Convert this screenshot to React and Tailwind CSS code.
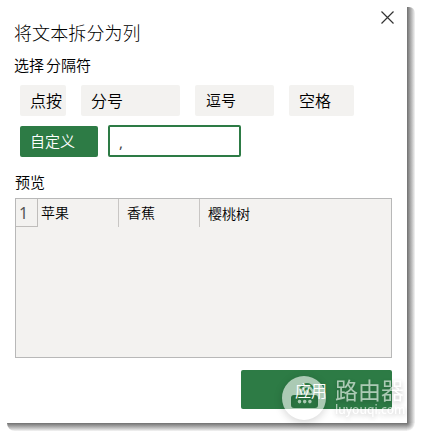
const delimiters = [
  { label: "点按", box: "w-[46px] pl-[10px] pb-[2px]" },
  { label: "分号", box: "w-[99px] pl-[10px] pb-[2px]" },
  { label: "逗号", box: "w-[79px] pl-[11px] text-[15px]" },
  { label: "空格", box: "w-[65px] pl-[10px] pb-px" },
];

function CloseIcon() {
  return (
    <svg className="-mr-[2px]" width="13" height="13" viewBox="0 0 13 13" fill="none" stroke="#333" strokeWidth="1.2">
      <path d="M.5.5 12.5 12.5M12.5.5.5 12.5" />
    </svg>
  );
}

function Watermark() {
  return (
    <div className="pointer-events-none absolute left-[282px] top-[376px] flex text-white opacity-60">
      <svg className="overflow-visible drop-shadow-[0_2px_4px_rgba(0,0,0,0.3)]" width="44" height="44" viewBox="0 0 44 44">
        <path
          fill="#fff"
          fillRule="evenodd"
          d="M22 0a22 22 0 1 0 0 44a22 22 0 1 0 0-44ZM12 19H33Q36 19 36 22V29Q36 32 33 32H12Q9 32 9 29V22Q9 19 12 19ZM17.5 23.8a1.8 1.8 0 1 0 0 3.6a1.8 1.8 0 1 0 0-3.6ZM22.7 23.8a1.8 1.8 0 1 0 0 3.6a1.8 1.8 0 1 0 0-3.6ZM27.9 23.8a1.8 1.8 0 1 0 0 3.6a1.8 1.8 0 1 0 0-3.6Z"
        />
        <path d="M18 13Q25 3 32 13M21 17Q25 8 29 17" fill="none" stroke="#2d7b45" strokeWidth="2.2" />
      </svg>
      <div className="ml-[9px] flex flex-col whitespace-nowrap [text-shadow:0_2px_5px_rgba(0,0,0,0.4)]">
        <span className="h-[27px] text-[23px] leading-[27px] font-normal">路由器</span>
        <span className="font-['Noto_Sans',sans-serif] text-[12px] leading-[13px] font-medium">luyouqi.com</span>
      </div>
    </div>
  );
}

export default function App() {
  return (
    <div className="relative grid h-[438px] w-[422px] grid-cols-[407px_8px] grid-rows-[423px_8px] overflow-hidden bg-white font-['Noto_Sans_CJK_SC',sans-serif] font-[350] text-black">
      <main className="flex flex-col bg-white px-[15px]">
        <div className="flex h-[22px] justify-end pt-[11px]">
          <CloseIcon />
        </div>
        <h1 className="-ml-px h-[33px] text-[18px] leading-[20px] tracking-[0.1px] font-light">将文本拆分为列</h1>
        <h2 className="-ml-px flex h-[30px] gap-[2px] text-[15px] leading-[20px] font-[350]">
          <span>选择</span>
          <span>分隔符</span>
        </h2>
        <div className="ml-[5px] flex gap-[15px] text-[16px]">
          {delimiters.map((item) => (
            <button key={item.label} className={"flex h-[31px] items-center rounded-[2px] bg-[#f3f2f0] text-left " + item.box}>
              {item.label}
            </button>
          ))}
        </div>
        <div className="ml-[5px] mt-[9px] flex gap-[10px]">
          <button className="mt-px flex h-[31px] w-[78px] items-center rounded-[2px] bg-[#2d7b45] pl-[10px] text-[15px] text-white">自定义</button>
          <div className="flex h-[32px] w-[133px] items-center rounded-[2px] border-2 border-[#2d7b45] pl-[9px] pt-[2px] font-['Noto_Sans',sans-serif] text-[15px] font-normal text-[#444]">,</div>
        </div>
        <h2 className="mt-[15px] h-[26px] text-[15px] leading-[20px] font-[350]">预览</h2>
        <div className="h-[160px] border border-[#b8b8b8] bg-[#f3f2f0]">
          <div className="flex h-[28px] text-[14px]">
            <div className="flex w-[22px] items-center border-r border-b border-[#bfbdbb] pl-[3px] pt-px font-['Noto_Sans',sans-serif] text-[16px] font-normal text-[#555]">1</div>
            <div className="flex w-[81px] items-center border-r border-[#c8c6c4] pl-[3px] pb-[2px]">苹果</div>
            <div className="flex w-[81px] items-center border-r border-[#c8c6c4] pl-[8px] pb-[2px]">香蕉</div>
            <div className="flex flex-1 items-center pl-[8px]">樱桃树</div>
          </div>
        </div>
        <button className="mt-[12px] flex h-[39px] w-[151px] items-center self-end rounded-[2px] bg-[#2d7b45] pl-[54px] text-[16px] text-white">
          <span className="relative z-10">应用</span>
        </button>
      </main>
      <div className="mt-[7px] rounded-tr-[6px] bg-linear-to-r from-[#707070] to-[#f5f5f5]" />
      <div className="ml-[7px] rounded-bl-[8px] bg-linear-to-b from-[#707070] to-[#f5f5f5]" />
      <div className="rounded-br-[8px] bg-radial-[at_0%_0%] from-[#707070] to-[#fafafa] to-70%" />
      <Watermark />
    </div>
  );
}
